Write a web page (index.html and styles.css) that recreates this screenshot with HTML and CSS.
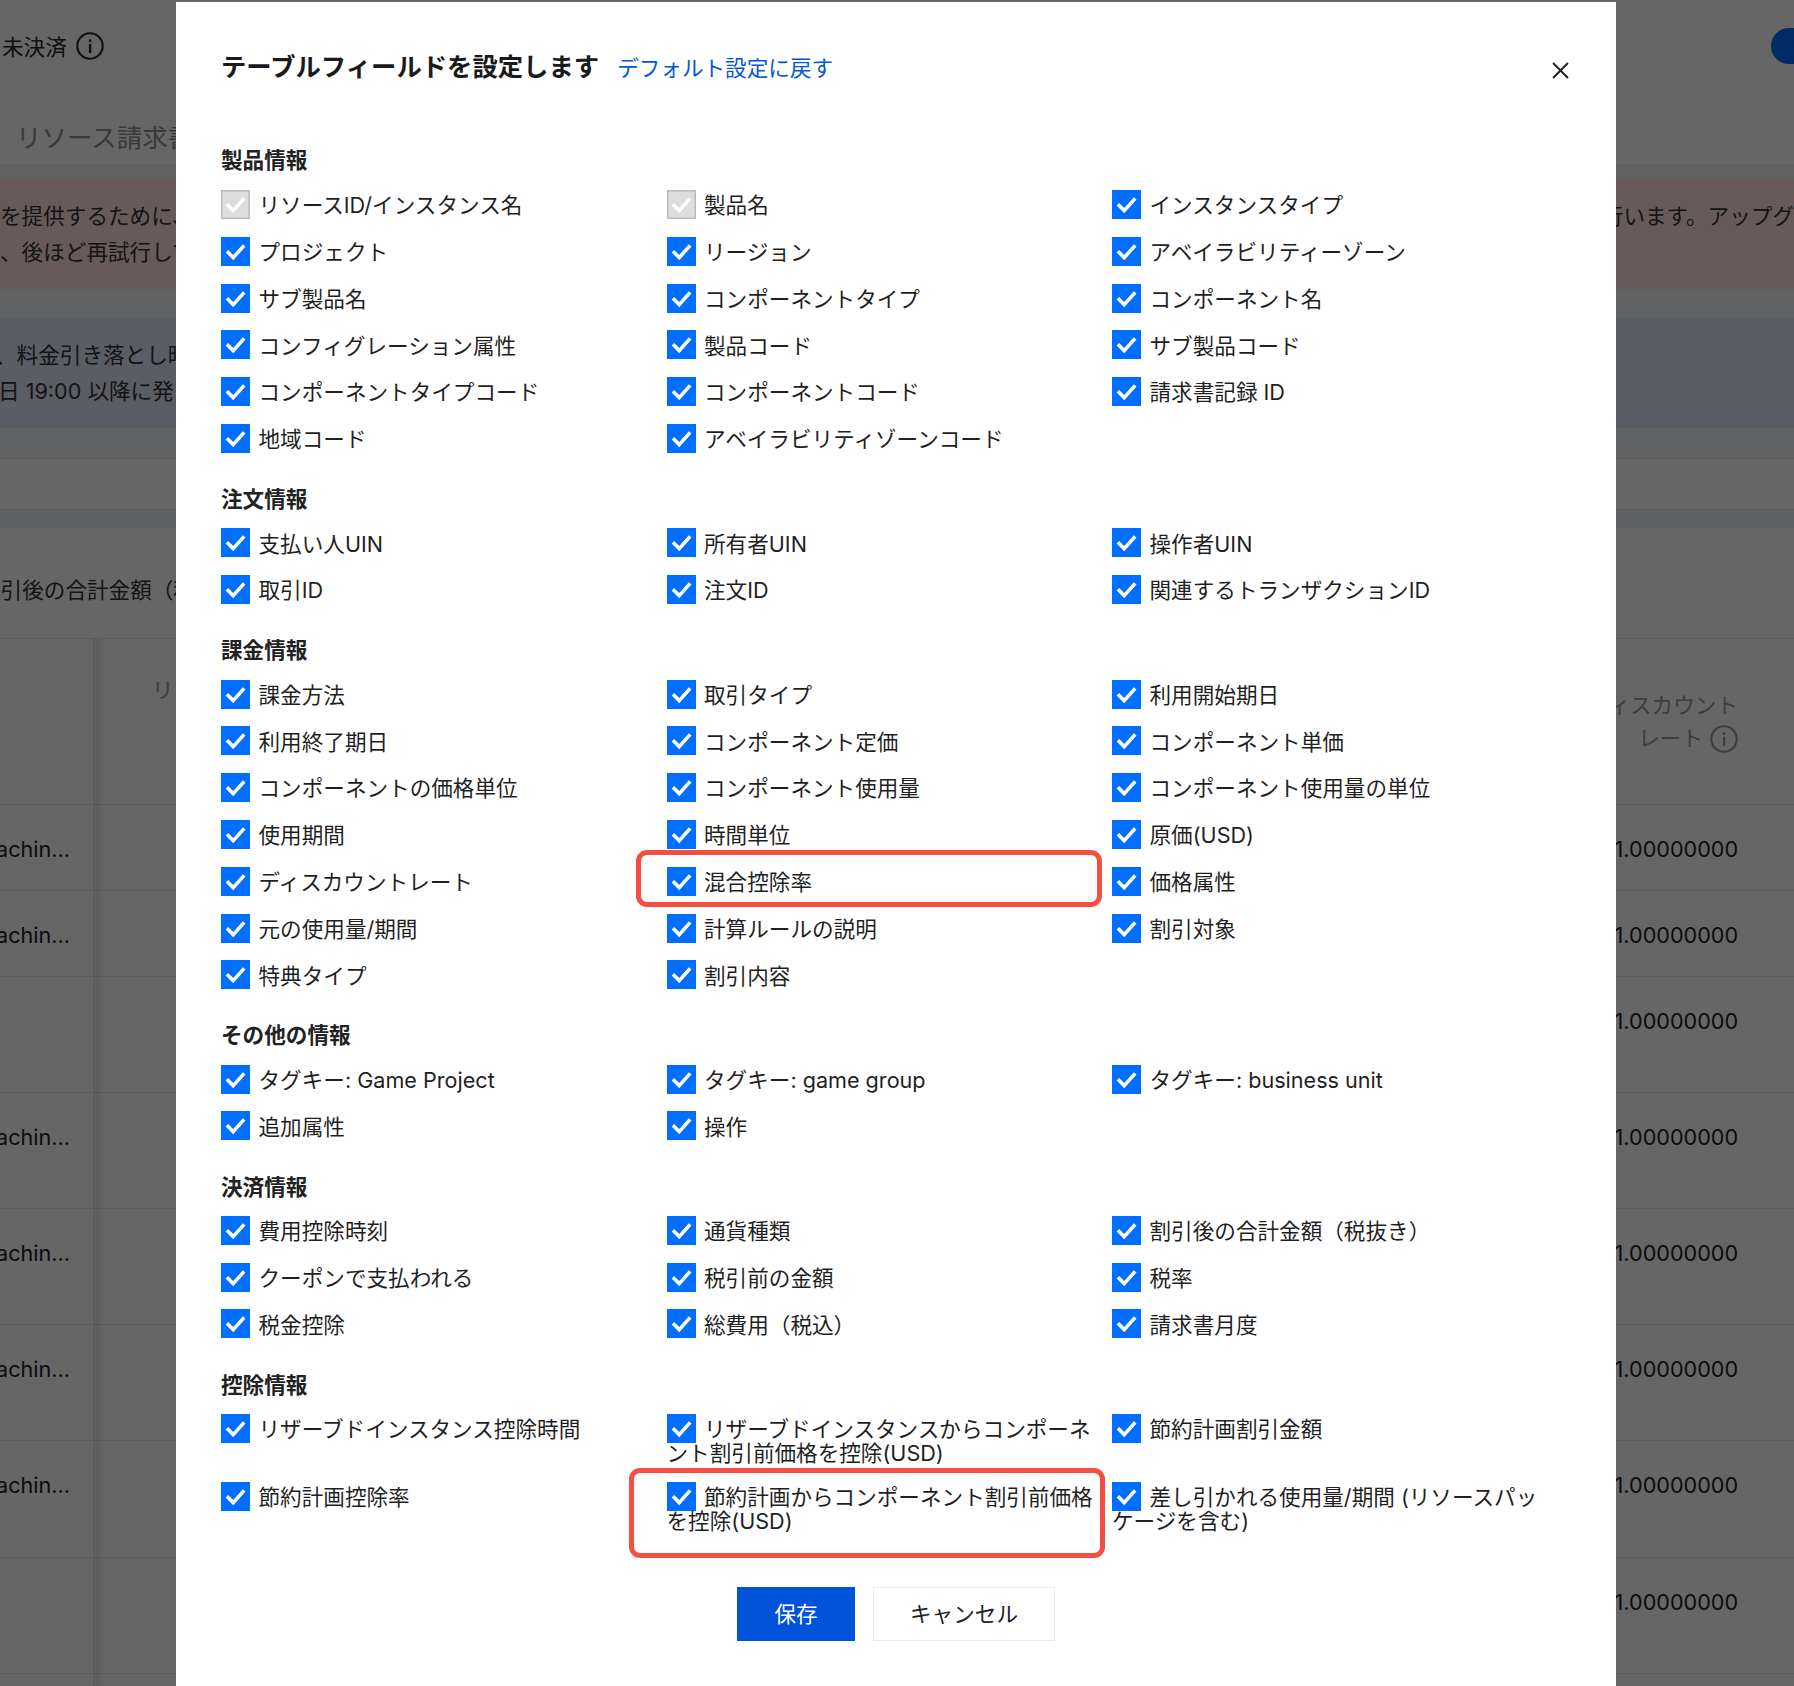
FILE: index.html
```html
<!DOCTYPE html>
<html lang="ja">
<head>
<meta charset="utf-8">
<title>テーブルフィールドを設定します</title>
<link rel="stylesheet" href="styles.css">
</head>
<body>
<svg class="defs" aria-hidden="true"><symbol id="tick" viewBox="0 0 29 29"><path d="M5.9 14.2 12.2 20.6 23.2 8.4" fill="none" stroke="#fff" stroke-width="3.6"/></symbol>
<symbol id="info" viewBox="0 0 26 26"><circle cx="13" cy="13" r="11.8" fill="none" stroke="currentColor" stroke-width="2"/><rect x="12" y="11" width="2.2" height="8.5" fill="currentColor"/><rect x="12" y="6.8" width="2.2" height="2.4" fill="currentColor"/></symbol></svg>
<div class="page">
  <div class="top"><span class="status">未決済</span><svg class="info"><use href="#info"/></svg><span class="pill"></span></div>
  <div class="tabs">リソース請求書</div>
  <div class="notices">
    <div class="notice red"><div class="notice-row"><span>を提供するために、</span><span class="notice-end">行います。アップグ</span></div><div>、後ほど再試行して</div></div>
    <div class="notice blue"><div class="lead-a">、料金引き落とし時</div><div class="lead-b">日 19:00 以降に発</div></div>
  </div>
  <div class="filter"></div>
  <div class="summary"><span>割引後の合計金額（税抜き）</span></div>
  <div class="table">
    <div class="thead">
      <div class="th-left"><span>リソースID/</span><span>インスタンス</span></div>
      <div class="th-right"><span>ディスカウント</span><span class="th-line">レート<svg class="info small"><use href="#info"/></svg></span></div>
    </div>
    <div class="row short"><span class="cell-left">achin...</span><span class="cell-right">1.00000000</span></div>
    <div class="row short"><span class="cell-left">achin...</span><span class="cell-right">1.00000000</span></div>
    <div class="row tall"><span class="cell-left"></span><span class="cell-right">1.00000000</span></div>
    <div class="row tall"><span class="cell-left">achin...</span><span class="cell-right">1.00000000</span></div>
    <div class="row tall"><span class="cell-left">achin...</span><span class="cell-right">1.00000000</span></div>
    <div class="row tall"><span class="cell-left">achin...</span><span class="cell-right">1.00000000</span></div>
    <div class="row tall"><span class="cell-left">achin...</span><span class="cell-right">1.00000000</span></div>
    <div class="row tall"><span class="cell-left"></span><span class="cell-right">1.00000000</span></div>
    <div class="row"></div>
    <div class="shadow"></div>
  </div>
</div>
<div class="overlay"></div>
<div class="modal">
  <header class="head">
    <h2>テーブルフィールドを設定します</h2>
    <a class="reset">デフォルト設定に戻す</a>
    <svg class="close" viewBox="0 0 16 16"><path d="M1 1 15 15M15 1 1 15" stroke="#222" stroke-width="1.9" fill="none"/></svg>
  </header>

  <section>
    <h3>製品情報</h3>
    <div class="fields">
      <label class="field"><span class="box off"><svg><use href="#tick"/></svg></span>リソースID/インスタンス名</label>
      <label class="field"><span class="box off"><svg><use href="#tick"/></svg></span>製品名</label>
      <label class="field"><span class="box"><svg><use href="#tick"/></svg></span>インスタンスタイプ</label>
      <label class="field"><span class="box"><svg><use href="#tick"/></svg></span>プロジェクト</label>
      <label class="field"><span class="box"><svg><use href="#tick"/></svg></span>リージョン</label>
      <label class="field"><span class="box"><svg><use href="#tick"/></svg></span>アベイラビリティーゾーン</label>
      <label class="field"><span class="box"><svg><use href="#tick"/></svg></span>サブ製品名</label>
      <label class="field"><span class="box"><svg><use href="#tick"/></svg></span>コンポーネントタイプ</label>
      <label class="field"><span class="box"><svg><use href="#tick"/></svg></span>コンポーネント名</label>
      <label class="field"><span class="box"><svg><use href="#tick"/></svg></span>コンフィグレーション属性</label>
      <label class="field"><span class="box"><svg><use href="#tick"/></svg></span>製品コード</label>
      <label class="field"><span class="box"><svg><use href="#tick"/></svg></span>サブ製品コード</label>
      <label class="field"><span class="box"><svg><use href="#tick"/></svg></span>コンポーネントタイプコード</label>
      <label class="field"><span class="box"><svg><use href="#tick"/></svg></span>コンポーネントコード</label>
      <label class="field"><span class="box"><svg><use href="#tick"/></svg></span>請求書記録 ID</label>
      <label class="field"><span class="box"><svg><use href="#tick"/></svg></span>地域コード</label>
      <label class="field"><span class="box"><svg><use href="#tick"/></svg></span>アベイラビリティゾーンコード</label>
    </div>
  </section>

  <section>
    <h3>注文情報</h3>
    <div class="fields">
      <label class="field"><span class="box"><svg><use href="#tick"/></svg></span>支払い人UIN</label>
      <label class="field"><span class="box"><svg><use href="#tick"/></svg></span>所有者UIN</label>
      <label class="field"><span class="box"><svg><use href="#tick"/></svg></span>操作者UIN</label>
      <label class="field"><span class="box"><svg><use href="#tick"/></svg></span>取引ID</label>
      <label class="field"><span class="box"><svg><use href="#tick"/></svg></span>注文ID</label>
      <label class="field"><span class="box"><svg><use href="#tick"/></svg></span>関連するトランザクションID</label>
    </div>
  </section>

  <section>
    <h3>課金情報</h3>
    <div class="fields">
      <label class="field"><span class="box"><svg><use href="#tick"/></svg></span>課金方法</label>
      <label class="field"><span class="box"><svg><use href="#tick"/></svg></span>取引タイプ</label>
      <label class="field"><span class="box"><svg><use href="#tick"/></svg></span>利用開始期日</label>
      <label class="field"><span class="box"><svg><use href="#tick"/></svg></span>利用終了期日</label>
      <label class="field"><span class="box"><svg><use href="#tick"/></svg></span>コンポーネント定価</label>
      <label class="field"><span class="box"><svg><use href="#tick"/></svg></span>コンポーネント単価</label>
      <label class="field"><span class="box"><svg><use href="#tick"/></svg></span>コンポーネントの価格単位</label>
      <label class="field"><span class="box"><svg><use href="#tick"/></svg></span>コンポーネント使用量</label>
      <label class="field"><span class="box"><svg><use href="#tick"/></svg></span>コンポーネント使用量の単位</label>
      <label class="field"><span class="box"><svg><use href="#tick"/></svg></span>使用期間</label>
      <label class="field"><span class="box"><svg><use href="#tick"/></svg></span>時間単位</label>
      <label class="field"><span class="box"><svg><use href="#tick"/></svg></span>原価(USD)</label>
      <label class="field"><span class="box"><svg><use href="#tick"/></svg></span>ディスカウントレート</label>
      <label class="field"><span class="box"><svg><use href="#tick"/></svg></span>混合控除率</label>
      <label class="field"><span class="box"><svg><use href="#tick"/></svg></span>価格属性</label>
      <label class="field"><span class="box"><svg><use href="#tick"/></svg></span>元の使用量/期間</label>
      <label class="field"><span class="box"><svg><use href="#tick"/></svg></span>計算ルールの説明</label>
      <label class="field"><span class="box"><svg><use href="#tick"/></svg></span>割引対象</label>
      <label class="field"><span class="box"><svg><use href="#tick"/></svg></span>特典タイプ</label>
      <label class="field"><span class="box"><svg><use href="#tick"/></svg></span>割引内容</label>
    </div>
  </section>

  <section>
    <h3>その他の情報</h3>
    <div class="fields">
      <label class="field"><span class="box"><svg><use href="#tick"/></svg></span>タグキー: Game Project</label>
      <label class="field"><span class="box"><svg><use href="#tick"/></svg></span>タグキー: game group</label>
      <label class="field"><span class="box"><svg><use href="#tick"/></svg></span>タグキー: business unit</label>
      <label class="field"><span class="box"><svg><use href="#tick"/></svg></span>追加属性</label>
      <label class="field"><span class="box"><svg><use href="#tick"/></svg></span>操作</label>
    </div>
  </section>

  <section>
    <h3>決済情報</h3>
    <div class="fields">
      <label class="field"><span class="box"><svg><use href="#tick"/></svg></span>費用控除時刻</label>
      <label class="field"><span class="box"><svg><use href="#tick"/></svg></span>通貨種類</label>
      <label class="field"><span class="box"><svg><use href="#tick"/></svg></span>割引後の合計金額（税抜き）</label>
      <label class="field"><span class="box"><svg><use href="#tick"/></svg></span>クーポンで支払われる</label>
      <label class="field"><span class="box"><svg><use href="#tick"/></svg></span>税引前の金額</label>
      <label class="field"><span class="box"><svg><use href="#tick"/></svg></span>税率</label>
      <label class="field"><span class="box"><svg><use href="#tick"/></svg></span>税金控除</label>
      <label class="field"><span class="box"><svg><use href="#tick"/></svg></span>総費用（税込）</label>
      <label class="field"><span class="box"><svg><use href="#tick"/></svg></span>請求書月度</label>
    </div>
  </section>

  <section>
    <h3>控除情報</h3>
    <div class="fields">
      <label class="field"><span class="box"><svg><use href="#tick"/></svg></span>リザーブドインスタンス控除時間</label>
      <label class="field"><span class="box"><svg><use href="#tick"/></svg></span>リザーブドインスタンスからコンポーネント割引前価格を控除(USD)</label>
      <label class="field"><span class="box"><svg><use href="#tick"/></svg></span>節約計画割引金額</label>
      <label class="field"><span class="box"><svg><use href="#tick"/></svg></span>節約計画控除率</label>
      <label class="field"><span class="box"><svg><use href="#tick"/></svg></span>節約計画からコンポーネント割引前価格を控除(USD)</label>
      <label class="field"><span class="box"><svg><use href="#tick"/></svg></span>差し引かれる使用量/期間 (リソースパッケージを含む)</label>
    </div>
  </section>

  <footer class="actions">
    <button class="btn primary">保存</button>
    <button class="btn">キャンセル</button>
  </footer>

  <div class="mark mark-rate"></div>
  <div class="mark mark-plan"></div>
</div>
</body>
</html>
```
FILE: styles.css
```css
* { box-sizing: border-box; }
html, body { margin: 0; padding: 0; }
body {
  position: relative;
  width: 1794px;
  height: 1686px;
  overflow: hidden;
  background: #fff;
  font-family: Inter, "Noto Sans CJK JP", sans-serif;
  font-size: 21.6px;
  color: #333;
}
.defs { position: absolute; width: 0; height: 0; }

/* page behind the dialog */
.page { width: 1794px; height: 1686px; overflow: hidden; }
.top { display: flex; align-items: center; height: 91px; padding-left: 2px; color: #2a2a2a; }
.status { margin-right: 9px; }
.info { width: 28px; height: 28px; color: #2a2a2a; }
.info.small { color: #999; margin-left: 7px; }
.pill {
  width: 60px;
  height: 36px;
  margin-left: auto;
  margin-right: -37px;
  border-radius: 18px;
  background: #006eff;
}
.tabs {
  height: 74px;
  padding: 29px 0 0 16px;
  font-size: 25.5px;
  line-height: 36px;
  color: #8f8f8f;
  border-bottom: 1px solid #ebebeb;
}
.notices { padding: 14px 0 30px; background: #f3f5f7; }
.notice { height: 110px; padding-top: 19px; line-height: 36px; color: #333; white-space: nowrap; overflow: hidden; }
.notice.red { background: #ffe4e0; margin-bottom: 29px; }
.notice.blue { background: #e2e8fa; }
.notice-row { display: flex; justify-content: space-between; }
.lead-a { margin-left: -5px; }
.lead-b { margin-left: -2px; }
.filter { height: 52px; border-top: 1px solid #e8e8e8; border-bottom: 1px solid #e4e6ea; }
.summary {
  height: 128px;
  padding-top: 44px;
  line-height: 36px;
  border-top: 18px solid #f1f3f6;
  color: #333;
  white-space: nowrap;
  overflow: hidden;
}
.summary span { display: block; margin-left: -21px; }
.table { position: relative; border-top: 1px solid #e6e6e6; }
.thead { display: flex; justify-content: space-between; height: 166px; border-bottom: 1px solid #e8e8e8; color: #999; }
.th-left { display: flex; flex-direction: column; padding: 35px 0 0 152px; line-height: 32px; white-space: nowrap; }
.th-left span + span { margin-left: 23px; }
.th-right { display: flex; flex-direction: column; align-items: flex-end; padding: 50px 56px 0 0; line-height: 33px; }
.th-line { display: flex; align-items: center; }
.row { display: flex; justify-content: space-between; align-items: flex-start; padding: 29px 56px 0 0; line-height: 30px; border-bottom: 1px solid #e8e8e8; color: #222; height: 116.2px; }
.row.short { height: 85.8px; }
.cell-left { margin-left: -4px; }
.shadow {
  position: absolute;
  left: 93px;
  top: 0;
  bottom: -100px;
  width: 14px;
  background: linear-gradient(to right, rgba(0,0,0,.1), rgba(0,0,0,0));
}

.overlay { position: absolute; inset: 0; background: rgba(0,0,0,.6); }

/* dialog */
.modal {
  position: absolute;
  left: 176px;
  top: 2px;
  width: 1440px;
  height: 1700px;
  padding: 46px 45px 0;
  background: #fff;
  color: #1f1f1f;
}
.head { position: relative; display: flex; align-items: center; height: 38px; margin-bottom: 48.9px; }
.head h2 { margin: 0 18px 0 0; font-size: 25.35px; line-height: 38px; font-weight: 600; color: #1a1a1a; }
.reset { color: #0058d9; line-height: 38px; position: relative; top: 1px; }
.close { position: absolute; right: 2px; top: 14px; width: 17px; height: 17px; }
h3 { margin: 0; padding: 13.9px 0 19.7px; font-size: 21.6px; line-height: 24px; font-weight: 600; color: #222; }
section:first-of-type h3 { padding: 13px 0 20.6px; }
.fields { display: grid; grid-template-columns: repeat(3, 435px); column-gap: 10.5px; }
.field { display: block; min-height: 46.8px; padding: 0.8px 0 19.2px; line-height: 24px; }
.box {
  display: inline-block;
  width: 29px;
  height: 29px;
  margin: -3.3px 8.5px -2.5px 0;
  vertical-align: top;
  background: #006eff;
}
.box svg { display: block; width: 29px; height: 29px; }
.box.off { background: #ddd; box-shadow: inset 0 0 0 1.5px #bbb; }
.actions { display: flex; justify-content: center; gap: 18px; margin-top: 34.5px; }
.btn {
  width: 182px;
  height: 54px;
  padding: 0 0 2px;
  border: 1.5px solid #e8eaf0;
  background: #fff;
  font: inherit;
  color: #222;
}
.btn.primary { width: 118px; border: 0; background: #0052d9; color: #fff; }
.mark { position: absolute; border: 5.5px solid #f44f42; border-radius: 11px; }
.mark-rate { left: 460px; top: 848px; width: 466px; height: 57px; }
.mark-plan { left: 453px; top: 1466px; width: 476px; height: 90px; }
```
